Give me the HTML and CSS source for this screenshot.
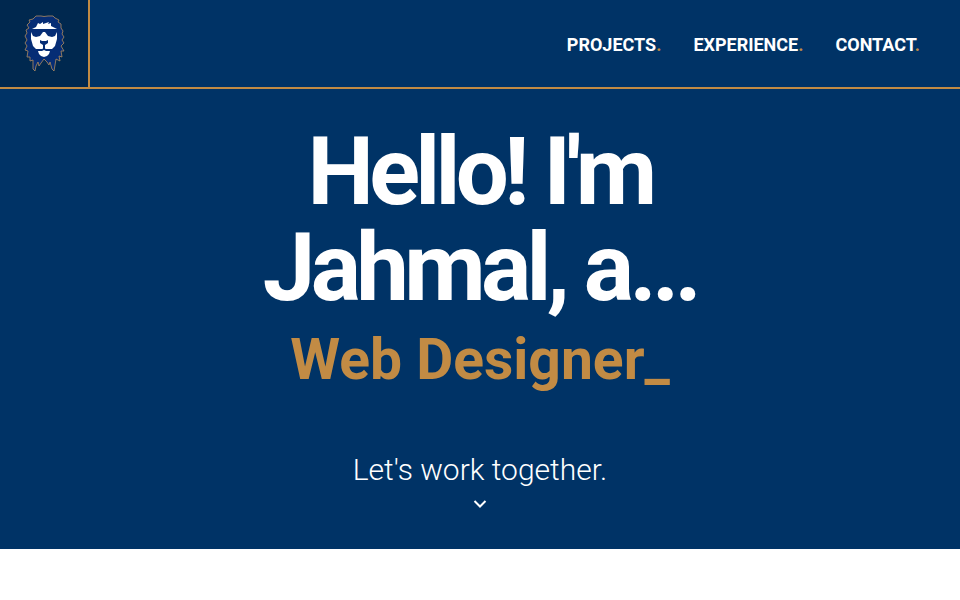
FILE: index.html
```html
<!DOCTYPE html>
<html lang="en">
<head>
<meta charset="utf-8">
<meta name="viewport" content="width=device-width, initial-scale=1">
<title>Jahmal</title>
<link rel="stylesheet" href="styles.css">
</head>
<body>
<header class="site-header">
  <a class="logo" href="#" aria-label="Home">
    <svg class="logo-mark" viewBox="0 0 42 58" aria-hidden="true">
      <path class="mane" d="M11 3L13 1L18 1L21 1.500L25 1L30 1L32 3L36 5L35 7L38 9L38 13L40 16L39 19L41 22L39 25L41 28L38 31L41 36L38 36L39 42L36 41L37 46L33 44L32 50L31 56L29 54L27 47L26 50L24 47L21 44L18 48L16 51L15 47L13 51L12 56L10 54L10 45L7 46L7 42L4 42L5 36L2 35L4 31L2 28L4 25L2 21L4 18L3 15L6 13L4 10L7 7L6 5L10 4Z"/>
      <path class="face" d="M9 14L13 12L15 8L17 9L20 7L20 9L26 7L25 9L28 8L28 11L32 13L34 14L34 24L32 31L29 34H23L21 33L19 34H13L10 31L8 24L8 14Z"/>
      <path class="face" d="M15 36L19 36L21 35L23 36L27 36L26 39L24 41L21 42L18 41L16 39Z"/>
      <path class="detail" d="M8 14H34V17L32 21L29 22L25 21L22 17H20L17 21L13 22L10 21L8 17ZM17 25L19 26H23L25 25L25 28L22 30V34H20V30L17 28Z"/>
    </svg>
  </a>
  <nav class="site-nav" aria-label="Main">
    <a href="#projects">PROJECTS<span class="dot">.</span></a>
    <a href="#experience">EXPERIENCE<span class="dot">.</span></a>
    <a href="#contact">CONTACT<span class="dot">.</span></a>
  </nav>
</header>
<main class="hero">
  <h1 class="greeting">Hello! I'm<br>Jahmal, a...</h1>
  <p class="role">Web Designer_</p>
  <a class="invite" href="#contact">Let's work together.
    <svg class="chevron" viewBox="0 0 14 8" aria-hidden="true"><path d="M1.500 1L7 6.500L12.500 1"/></svg>
  </a>
</main>
</body>
</html>
```

FILE: styles.css
```css
* { box-sizing: border-box; }

body {
  margin: 0;
  background: #fff;
  color: #fff;
  font-family: Roboto, "Liberation Sans", sans-serif;
}

a { color: inherit; text-decoration: none; }

.site-header {
  display: flex;
  justify-content: space-between;
  background: #003366;
  border-bottom: 2px solid #c28b44;
}

.logo {
  display: flex;
  padding: 15px 23px 14px;
  background: #00284f;
  border-right: 2px solid #c28b44;
}

.logo-mark { width: 42px; height: 58px; }
.mane { fill: #062d75; stroke: #b08c60; stroke-width: 0.8; }
.face { fill: #fff; }
.detail { fill: #062d75; }

.site-nav {
  display: flex;
  align-items: center;
  gap: 32px;
  padding: 2px 40px 0 0;
  font-size: 18px;
  font-weight: 700;
  line-height: 24px;
}

.dot { color: #c28b44; }

.hero {
  display: flex;
  flex-direction: column;
  align-items: center;
  padding: 35px 24px 40px;
  background: #003366;
  text-align: center;
}

.greeting {
  margin: 0;
  font-size: 94px;
  font-weight: 700;
  line-height: 96px;
  letter-spacing: -0.05em;
}

.role {
  margin: 4px 0 0;
  color: #c28b44;
  font-size: 57px;
  font-weight: 700;
  line-height: 80px;
}

.invite {
  display: flex;
  flex-direction: column;
  align-items: center;
  gap: 12px;
  margin-top: 52px;
  padding-bottom: 1px;
  font-size: 30px;
  font-weight: 300;
  line-height: 36px;
}

.chevron {
  width: 14px;
  height: 8px;
  fill: none;
  stroke: #fff;
  stroke-width: 2;
}
```
